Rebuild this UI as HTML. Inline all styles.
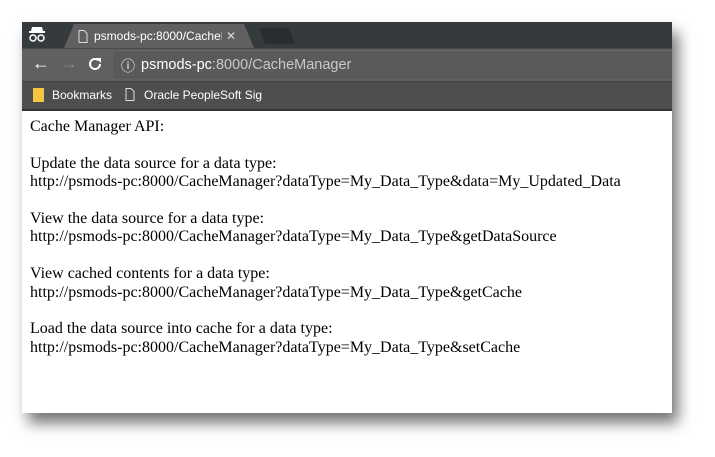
<!DOCTYPE html>
<html><head><style>
body{margin:0;width:715px;height:457px;background:#fff;position:relative;overflow:hidden;font-family:"Liberation Sans",sans-serif}
.win{position:absolute;left:22px;top:22px;width:650px;height:391px;background:#fff;box-shadow:6px 10px 14px rgba(0,0,0,.55);overflow:hidden}
.tabs{position:absolute;left:0;top:0;width:650px;height:26px;background:#353a3d}
.tab{position:absolute;left:42px;top:2px;width:190px;height:24px;background:#606060;clip-path:polygon(10px 0,180px 0,190px 24px,0 24px)}
.tab span{position:absolute;left:30px;top:5px;color:#fff;font-size:12px;white-space:nowrap;width:128px;overflow:hidden}
.tb{position:absolute;left:0;top:26px;width:650px;height:32px;background:#606060;border-top:1px solid #4a4a4a}
.url{position:absolute;left:92px;top:3px;width:570px;height:24px;background:#5a5a5a;border-radius:2px;border:1px solid #555}
.url span{position:absolute;left:26px;top:4px;font-size:14.5px;color:#fff;white-space:nowrap}
.bm{position:absolute;left:0;top:59px;width:650px;height:27px;background:#4e4e4e;border-top:1px solid #444;border-bottom:2px solid #333}
.bm span{position:absolute;top:6px;color:#fff;font-size:12px;white-space:nowrap}
.content{position:absolute;left:8px;top:96px;font-family:"Liberation Serif",serif;font-size:16px;line-height:18.4px;color:#000;white-space:nowrap}
.content p{margin:0 0 18.4px}
</style></head><body>
<div class="win">
<div class="tabs">
<svg style="position:absolute;left:6px;top:4px" width="18" height="16" viewBox="0 0 18 16"><path d="M4 1h10l1 4H3z" fill="#fff"/><rect x="1" y="5" width="16" height="2" fill="#fff"/><circle cx="5" cy="12" r="3" fill="none" stroke="#fff" stroke-width="1.5"/><circle cx="13" cy="12" r="3" fill="none" stroke="#fff" stroke-width="1.5"/></svg>
<div class="tab"><svg style="position:absolute;left:14px;top:6px" width="10" height="13"><path d="M1 .5h5l3 3v9H1z" fill="none" stroke="#ddd"/></svg><span>psmods-pc:8000/CacheM</span><span style="left:162px;width:10px;color:#ddd">✕</span></div>
<div style="position:absolute;left:240px;top:6px;width:30px;height:16px;background:#2a2e30;transform:skewX(20deg)"></div>
</div>
<div class="tb">
<span style="position:absolute;left:10px;top:4px;color:#fff;font-size:18px">←</span>
<span style="position:absolute;left:38px;top:4px;color:#888;font-size:18px">→</span>
<svg style="position:absolute;left:65px;top:7px" width="16" height="16" viewBox="0 0 16 16"><path d="M13 8a5 5 0 1 1-1.5-3.6" fill="none" stroke="#fff" stroke-width="2"/><path d="M9 2h5v5z" fill="#fff"/></svg>
<div class="url"><span style="left:6px;top:3px;font-size:14px">ⓘ</span><span>psmods-pc<span style="position:static;color:#c8c8c8">:8000/CacheManager</span></span></div>
</div>
<div class="bm">
<div style="position:absolute;left:11px;top:6px;width:11px;height:14px;background:#f4c542"></div>
<span style="left:30px">Bookmarks</span>
<svg style="position:absolute;left:103px;top:6px" width="10" height="13"><path d="M1 .5h5l3 3v9H1z" fill="none" stroke="#ddd"/></svg>
<span style="left:122px">Oracle PeopleSoft Sig</span>
</div>
<div class="content">
<p>Cache Manager API:</p>
<p>Update the data source for a data type:<br>http://psmods-pc:8000/CacheManager?dataType=My_Data_Type&amp;data=My_Updated_Data</p>
<p>View the data source for a data type:<br>http://psmods-pc:8000/CacheManager?dataType=My_Data_Type&amp;getDataSource</p>
<p>View cached contents for a data type:<br>http://psmods-pc:8000/CacheManager?dataType=My_Data_Type&amp;getCache</p>
<p>Load the data source into cache for a data type:<br>http://psmods-pc:8000/CacheManager?dataType=My_Data_Type&amp;setCache</p>
</div>
</div>
</body></html>
